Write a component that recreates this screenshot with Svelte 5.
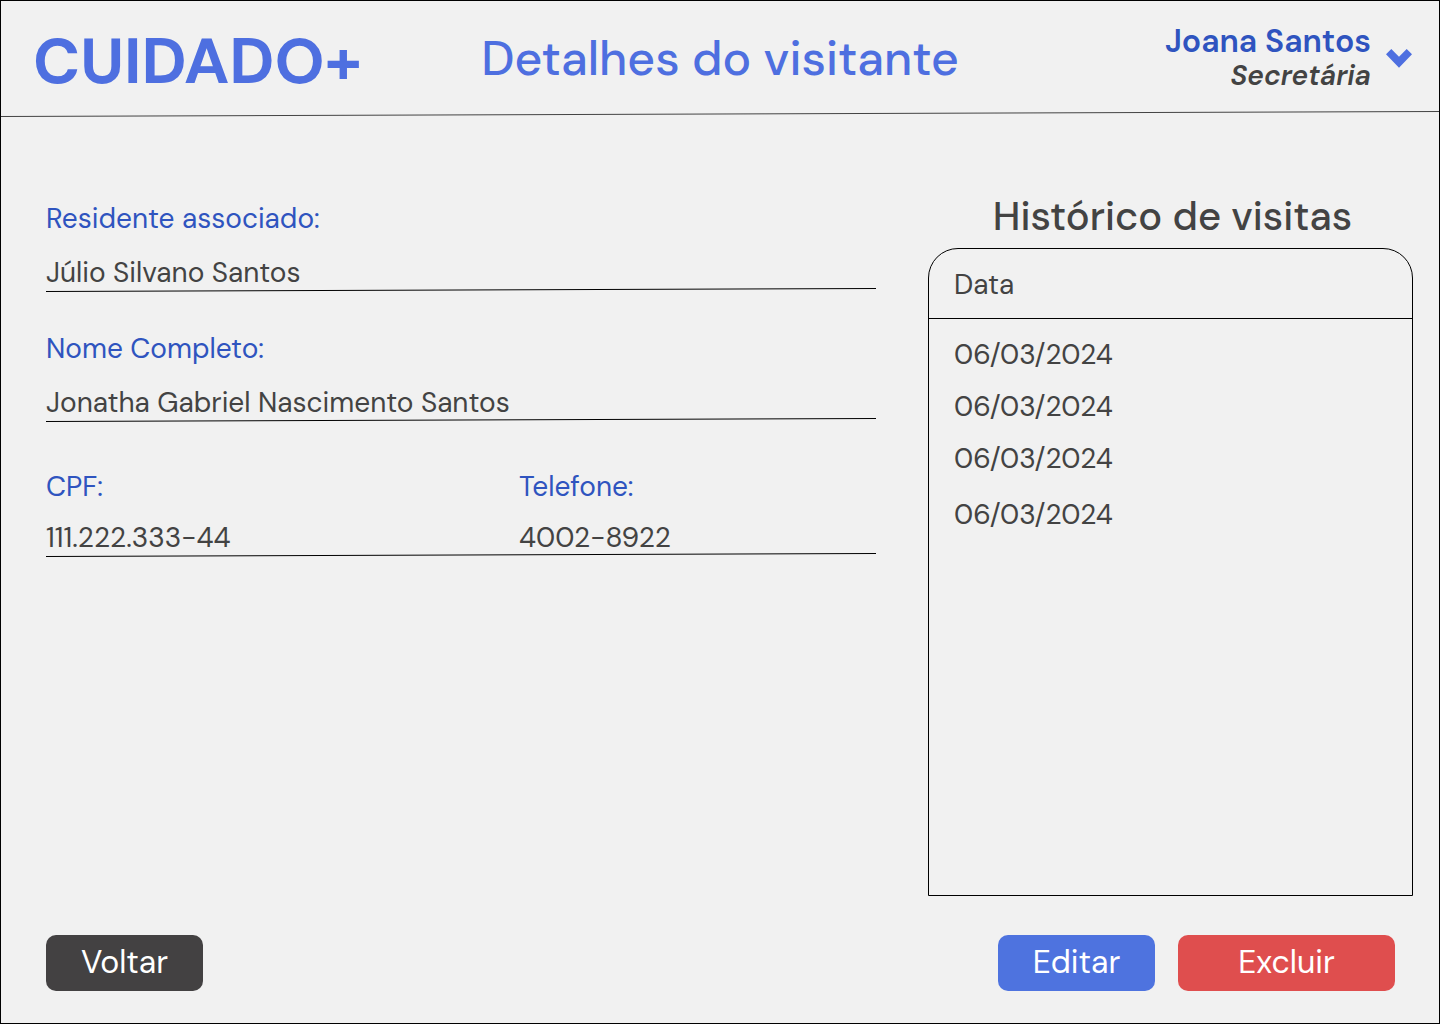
<script>
  const groups = [
    [{ label: 'Residente associado:', value: 'Júlio Silvano Santos' }],
    [{ label: 'Nome Completo:', value: 'Jonatha Gabriel Nascimento Santos' }],
    [
      { label: 'CPF:', value: '111.222.333-44' },
      { label: 'Telefone:', value: '4002-8922' }
    ]
  ];

  const visits = ['06/03/2024', '06/03/2024', '06/03/2024', '06/03/2024'];
</script>

<div class="page">
  <header class="topbar">
    <div class="brand">CUIDADO+</div>
    <h1>Detalhes do visitante</h1>
    <button class="user" type="button" aria-haspopup="menu">
      <span class="identity">
        <span class="name">Joana Santos</span>
        <span class="role">Secretária</span>
      </span>
      <svg class="chevron" viewBox="0 0 26 19" aria-hidden="true">
        <path d="M0 5.3 5.3 0 13 7.8 20.7 0 26 5.3 13 18.7Z" />
      </svg>
    </button>
  </header>
  <svg class="rule header-rule" viewBox="0 0 100 6" preserveAspectRatio="none" aria-hidden="true">
    <line x1="0" y1="5.5" x2="100" y2="0.5" />
  </svg>

  <main>
    <section class="details" aria-label="Dados do visitante">
      {#each groups as group}
        <div class="group" class:pair={group.length > 1}>
          <dl>
            {#each group as field}
              <div class="field">
                <dt>{field.label}</dt>
                <dd>{field.value}</dd>
              </div>
            {/each}
          </dl>
          <svg class="rule" viewBox="0 0 100 4" preserveAspectRatio="none" aria-hidden="true">
            <line x1="0" y1="3.5" x2="100" y2="0.5" />
          </svg>
        </div>
      {/each}
    </section>

    <section class="history">
      <h2 id="history-title">Histórico de visitas</h2>
      <div class="card">
        <table aria-labelledby="history-title">
          <thead>
            <tr><th scope="col">Data</th></tr>
          </thead>
          <tbody>
            {#each visits as visit}
              <tr><td>{visit}</td></tr>
            {/each}
          </tbody>
        </table>
      </div>
    </section>
  </main>

  <footer>
    <button class="btn back" type="button">Voltar</button>
    <button class="btn edit" type="button">Editar</button>
    <button class="btn delete" type="button">Excluir</button>
  </footer>
</div>

<style>
  :global(body) {
    background: #f1f1f1;
  }

  .page {
    box-sizing: border-box;
    min-height: 100vh;
    display: flex;
    flex-direction: column;
    border: 1px solid #000;
    background: #f1f1f1;
    color: #434343;
    font-family: 'DM Sans', Inter, 'Liberation Sans', sans-serif;
    font-size: 28px;
    line-height: 36px;
  }

  .topbar {
    display: grid;
    grid-template-columns: 1fr auto 1fr;
    align-items: center;
    min-height: 110px;
    padding: 0 27px;
  }

  .brand {
    padding: 12px 0 0 5px;
    color: #4e6fe0;
    font-size: 64px;
    font-weight: 700;
    line-height: 76px;
  }

  h1 {
    margin: 0;
    padding-top: 6px;
    color: #4e6fe0;
    font-size: 48px;
    font-weight: 500;
    line-height: 60px;
  }

  .user {
    justify-self: end;
    display: flex;
    align-items: center;
    gap: 15px;
    padding: 4px 0 0;
    border: 0;
    background: none;
    font-family: inherit;
    text-align: right;
    cursor: pointer;
  }

  .identity {
    display: flex;
    flex-direction: column;
  }

  .name {
    color: #2f54bf;
    font-size: 32px;
    font-weight: 600;
    line-height: 36px;
  }

  .role {
    color: #434343;
    font-size: 28px;
    font-style: italic;
    font-weight: 600;
    line-height: 34px;
  }

  .chevron {
    width: 26px;
    height: 19px;
    fill: #4e6fe0;
  }

  .rule {
    display: block;
    width: 100%;
    height: 4px;
  }

  .header-rule {
    height: 6px;
  }

  .rule line {
    stroke: #000;
    stroke-width: 1px;
    vector-effect: non-scaling-stroke;
  }

  .header-rule line {
    stroke: #434343;
  }

  main {
    flex: 1;
    display: grid;
    grid-template-columns: 830fr 485fr;
    gap: 52px;
    padding: 75px 26px 0 45px;
  }

  .details {
    padding-top: 9px;
  }

  .group {
    margin-bottom: 39px;
  }

  .group.pair {
    padding-top: 8px;
  }

  dl {
    display: grid;
    grid-template-columns: 1fr;
    margin: 0;
  }

  .pair dl {
    grid-template-columns: 57fr 43fr;
  }

  dt {
    margin-bottom: 21px;
    color: #2f54bf;
  }

  .pair dt {
    margin-bottom: 18px;
  }

  dd {
    margin: 0;
    line-height: 30px;
  }

  .history {
    display: flex;
    flex-direction: column;
  }

  h2 {
    margin: 0 0 8px;
    padding-left: 4px;
    font-size: 40px;
    font-weight: 500;
    line-height: 48px;
    text-align: center;
  }

  .card {
    flex: 1;
    border: 1px solid #000;
    border-radius: 30px 30px 0 0;
  }

  table {
    width: 100%;
    border-collapse: collapse;
  }

  th,
  td {
    padding: 8px 25px;
    font-weight: 400;
    text-align: left;
  }

  th {
    padding: 18px 25px 15px;
    border-bottom: 1px solid #000;
  }

  tbody tr:first-child td {
    padding-top: 18px;
  }

  tbody tr:last-child td {
    padding-top: 12px;
  }

  footer {
    display: flex;
    gap: 23px;
    padding: 39px 44px 32px 45px;
  }

  .btn {
    width: 157px;
    height: 56px;
    padding: 0 0 2px;
    border: 0;
    border-radius: 10px;
    color: #fff;
    font-family: inherit;
    font-size: 32px;
    line-height: 40px;
    cursor: pointer;
  }

  .back {
    margin-right: auto;
    background: #434142;
  }

  .edit {
    background: #4e73df;
  }

  .delete {
    width: 217px;
    background: #df4e4e;
  }
</style>
